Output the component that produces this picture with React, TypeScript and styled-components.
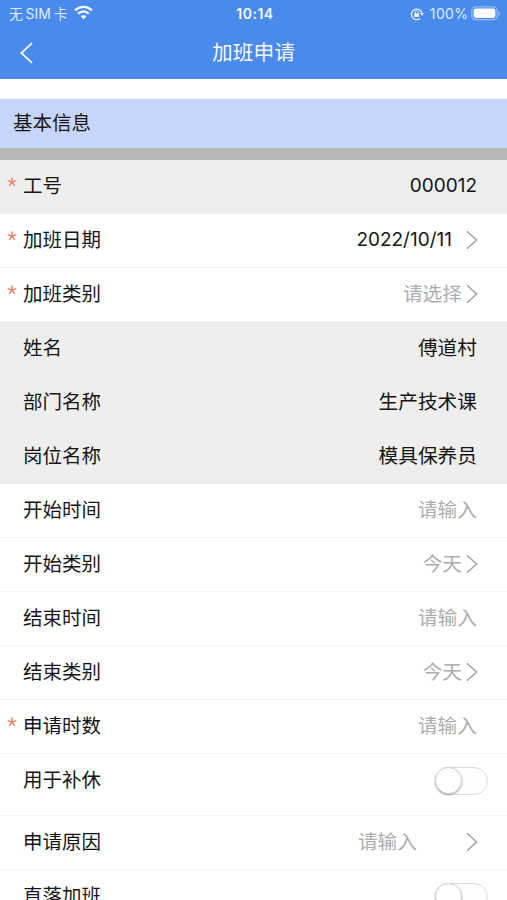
import React from "react";
import styled, { createGlobalStyle } from "styled-components";

const GlobalStyle = createGlobalStyle`
  * { box-sizing: border-box; }
  html, body { margin: 0; padding: 0; overflow: hidden; background: #fff; }
  body { font-family: Inter, "Noto Sans CJK SC", sans-serif; color: #141414; }
`;

const Screen = styled.main`
  width: 100%;
  height: 900px;
  overflow: hidden;
  background: #fff;
`;

const Header = styled.header`
  height: 79px;
  background: #4a8aea;
  color: #f2f7ff;
`;

const StatusBar = styled.div`
  height: 28px;
  display: grid;
  grid-template-columns: 1fr auto 1fr;
  align-items: center;
  padding: 0 6px 0 9px;
  font-size: 14px;
  line-height: 28px;
`;

const Carrier = styled.div`
  display: flex;
  align-items: center;
  color: #dfeaff;
  white-space: pre;
  svg { margin: -3px 0 0 7px; }
`;

const CarrierName = styled.span`
  display: flex;
  gap: 2.5px;
  font-size: 14px;
`;

const Clock = styled.div`
  font-size: 14px;
  font-weight: 600;
  letter-spacing: 0.5px;
`;

const Power = styled.div`
  display: flex;
  align-items: center;
  justify-content: flex-end;
  color: #dfeaff;
  letter-spacing: 0.4px;
  svg { margin-top: -1px; }
`;

const PowerText = styled.span`
  margin: 0 2.5px 0 6px;
`;

const NavBar = styled.div`
  height: 49px;
  display: grid;
  grid-template-columns: 60px 1fr 60px;
  align-items: center;
`;

const BackButton = styled.button`
  appearance: none;
  border: 0;
  background: none;
  padding: 0 0 0 19px;
  height: 49px;
  display: flex;
  align-items: center;
`;

const Title = styled.h1`
  margin: 0;
  text-align: center;
  font-size: 20.7px;
  font-weight: 400;
  line-height: 48px;
`;

const SectionTitle = styled.h2`
  margin: 20px 0 0;
  height: 49px;
  padding-left: 13px;
  background: #c8d5fb;
  font-size: 19.5px;
  font-weight: 400;
  line-height: 48px;
`;

const Divider = styled.div`
  height: 12px;
  background: #b7b9b9;
`;

const Row = styled.div<{ $readonly?: boolean; $tall?: boolean }>`
  height: ${(p) => (p.$tall ? 62 : 54)}px;
  display: flex;
  justify-content: space-between;
  background: ${(p) => (p.$readonly ? "#eeeeee" : "#fff")};
  border-bottom: 1.5px solid ${(p) => (p.$readonly ? "#eeeeee" : "#f3f3f3")};
  padding: 0 30px 0 7px;
`;

const Label = styled.div`
  display: flex;
  height: 53px;
  line-height: 52px;
  font-size: 19.5px;
`;

const Required = styled.span`
  width: 16px;
  padding-top: 17px;
  line-height: 0;
`;

const Value = styled.div<{ $placeholder?: boolean; $gap?: number }>`
  display: flex;
  align-items: center;
  gap: ${(p) => p.$gap ?? 0}px;
  height: 53px;
  line-height: 53px;
  font-size: 19.7px;
  color: ${(p) => (p.$placeholder ? "#adadad" : "#141414")};
  svg { margin: -1px -1px 0 0; }
`;

const Latin = styled.span`
  font-size: 19px;
  line-height: 51px;
  height: 53px;
`;

const Switch = styled.button`
  appearance: none;
  width: 53px;
  height: 28px;
  margin: 13px -11px 0 0;
  padding: 0;
  border: 1.5px solid #dedede;
  border-radius: 14px;
  background: #fdfdfd;
`;

const Knob = styled.span`
  display: block;
  width: 27px;
  height: 27px;
  margin: -1px 0 0 -1px;
  border-radius: 50%;
  background: #fff;
  border: 1px solid #d3d3d3;
  box-shadow: 0 1px 2px rgba(0, 0, 0, 0.32);
`;

const WifiIcon = () => (
  <svg width="19" height="15" viewBox="0 0 19 15" fill="none" stroke="#f7faff" strokeWidth="2.4">
    <path d="M1.1 5.3 C5.8 0.7 13.2 0.7 17.9 5.3" />
    <path d="M4.2 8.6 C7.3 5.7 11.7 5.7 14.8 8.6" />
    <path d="M9.5 14.3 L6.6 11.3 C8.2 9.8 10.8 9.8 12.4 11.3 Z" fill="#f7faff" stroke="none" />
  </svg>
);

const RotationLockIcon = () => (
  <svg width="14" height="14" viewBox="0 0 14 14" fill="none" stroke="#e6efff">
    <path d="M10.1 11.5 A5.3 5.3 0 1 1 12 6.6" strokeWidth="1.3" />
    <path d="M10.2 6.2 H14 L12.1 8.8 Z" fill="#e6efff" stroke="none" />
    <rect x="4.2" y="6.2" width="5" height="3.8" rx="0.6" fill="#e6efff" stroke="none" />
    <path d="M5.2 6.5 V5.4 A1.5 1.5 0 0 1 8.2 5.4 V6.5" strokeWidth="1" />
  </svg>
);

const BatteryIcon = () => (
  <svg width="30" height="15" viewBox="0 0 30 15">
    <rect x="0.8" y="0.8" width="25.4" height="12.9" rx="4" fill="none" stroke="#94bbf5" strokeWidth="1.2" />
    <rect x="2.6" y="2.6" width="21.8" height="9.3" rx="2.3" fill="#fff" />
    <path d="M27.5 5.2 C29.5 5.8 29.5 8.7 27.5 9.3 Z" fill="#94bbf5" />
  </svg>
);

const BackIcon = () => (
  <svg width="15" height="22" viewBox="0 0 15 22" fill="none" stroke="#f2f7ff" strokeWidth="1.8">
    <path d="M13 1.2 L2.4 11 L13 20.8" />
  </svg>
);

const ChevronIcon = () => (
  <svg width="12" height="20" viewBox="0 0 12 20" fill="none" stroke="#a3a3a3" strokeWidth="1.5">
    <path d="M1 1.3 L10.6 10 L1 18.7" />
  </svg>
);

const StarIcon = () => (
  <svg width="10" height="10" viewBox="0 0 10 10" fill="none" stroke="#ee8570" strokeWidth="1.5">
    <path d="M5 0.4 V5 M0.6 3.6 L5 5 M9.4 3.6 L5 5 M2.3 8.9 L5 5 M7.7 8.9 L5 5" />
  </svg>
);

type Field = {
  label: string;
  value?: string;
  required?: boolean;
  readonly?: boolean;
  placeholder?: boolean;
  latin?: boolean;
  gap?: number;
  toggle?: boolean;
};

const fields: Field[] = [
  { label: "工号", value: "000012", required: true, readonly: true, latin: true },
  { label: "加班日期", value: "2022/10/11", required: true, latin: true, gap: 14 },
  { label: "加班类别", value: "请选择", required: true, placeholder: true, gap: 4 },
  { label: "姓名", value: "傅道村", readonly: true },
  { label: "部门名称", value: "生产技术课", readonly: true },
  { label: "岗位名称", value: "模具保养员", readonly: true },
  { label: "开始时间", value: "请输入", placeholder: true },
  { label: "开始类别", value: "今天", placeholder: true, gap: 4 },
  { label: "结束时间", value: "请输入", placeholder: true },
  { label: "结束类别", value: "今天", placeholder: true, gap: 4 },
  { label: "申请时数", value: "请输入", required: true, placeholder: true },
  { label: "用于补休", toggle: true },
  { label: "申请原因", value: "请输入", placeholder: true, gap: 49 },
  { label: "直落加班", toggle: true },
];

const FieldRow = ({ field }: { field: Field }) => (
  <Row $readonly={field.readonly} $tall={field.toggle}>
    <Label>
      <Required>{field.required && <StarIcon />}</Required>
      {field.label}
    </Label>
    {field.toggle ? (
      <Switch role="switch" aria-checked={false}>
        <Knob />
      </Switch>
    ) : (
      <Value $placeholder={field.placeholder} $gap={field.gap}>
        {field.latin ? <Latin>{field.value}</Latin> : <span>{field.value}</span>}
        {field.gap !== undefined && <ChevronIcon />}
      </Value>
    )}
  </Row>
);

export default function App() {
  return (
    <Screen>
      <GlobalStyle />
      <Header>
        <StatusBar>
          <Carrier>
            <CarrierName>
              <span>无</span>
              <span>SIM</span>
              <span>卡</span>
            </CarrierName>
            <WifiIcon />
          </Carrier>
          <Clock>10:14</Clock>
          <Power>
            <RotationLockIcon />
            <PowerText>100%</PowerText>
            <BatteryIcon />
          </Power>
        </StatusBar>
        <NavBar>
          <BackButton>
            <BackIcon />
          </BackButton>
          <Title>加班申请</Title>
        </NavBar>
      </Header>
      <SectionTitle>基本信息</SectionTitle>
      <Divider />
      {fields.map((field) => (
        <FieldRow key={field.label} field={field} />
      ))}
    </Screen>
  );
}
